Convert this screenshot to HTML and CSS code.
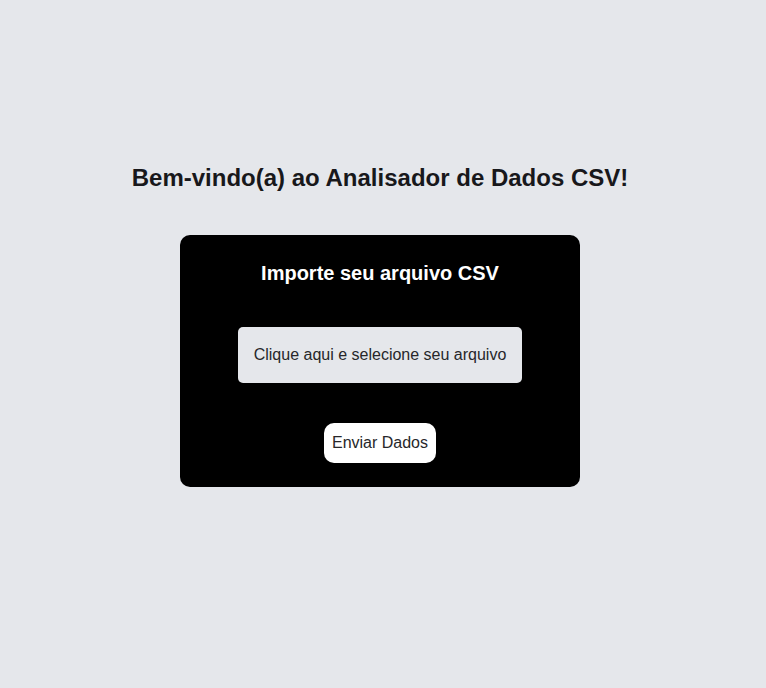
FILE: index.html
```html
<!DOCTYPE html>
<html lang="pt-BR">
<head>
<meta charset="utf-8">
<title>Analisador de Dados CSV</title>
<link rel="stylesheet" href="styles.css">
</head>
<body>
<main class="page">
  <h1 class="heading">Bem-vindo(a) ao Analisador de Dados CSV!</h1>
  <form class="card">
    <h2 class="card-title">Importe seu arquivo CSV</h2>
    <label class="file-label">Clique aqui e selecione seu arquivo<input class="file-input" type="file" accept=".csv"></label>
    <button class="submit" type="button">Enviar Dados</button>
  </form>
</main>
</body>
</html>
```
FILE: styles.css
```css
* { box-sizing: border-box; }
html, body { margin: 0; padding: 0; }
body {
  background: #e5e7eb;
  font-family: "Liberation Sans", Arial, sans-serif;
  color: #111827;
}
.page {
  min-height: 100vh;
  display: flex;
  flex-direction: column;
  align-items: center;
  padding: 162px 6px 0 0;
}
.heading {
  margin: 0 0 41px;
  font-size: 24px;
  line-height: 32px;
  font-weight: 700;
  color: #18181b;
}
.card {
  width: 400px;
  background: #000;
  border-radius: 10px;
  padding: 24px 0;
  display: flex;
  flex-direction: column;
  align-items: center;
}
.card-title {
  margin: 0 0 40px;
  font-size: 20px;
  line-height: 28px;
  font-weight: 700;
  color: #fff;
}
.file-label {
  display: block;
  width: 284px;
  padding: 16px 0;
  background: #e5e7eb;
  border-radius: 5px;
  text-align: center;
  font-size: 16px;
  line-height: 24px;
  color: #27272a;
  cursor: pointer;
}
.file-input { display: none; }
.submit {
  margin-top: 40px;
  width: 112px;
  height: 40px;
  padding: 0;
  border: none;
  background: #fff;
  border-radius: 10px;
  font-family: inherit;
  font-size: 16px;
  line-height: 24px;
  color: #27272a;
  cursor: pointer;
}
```
